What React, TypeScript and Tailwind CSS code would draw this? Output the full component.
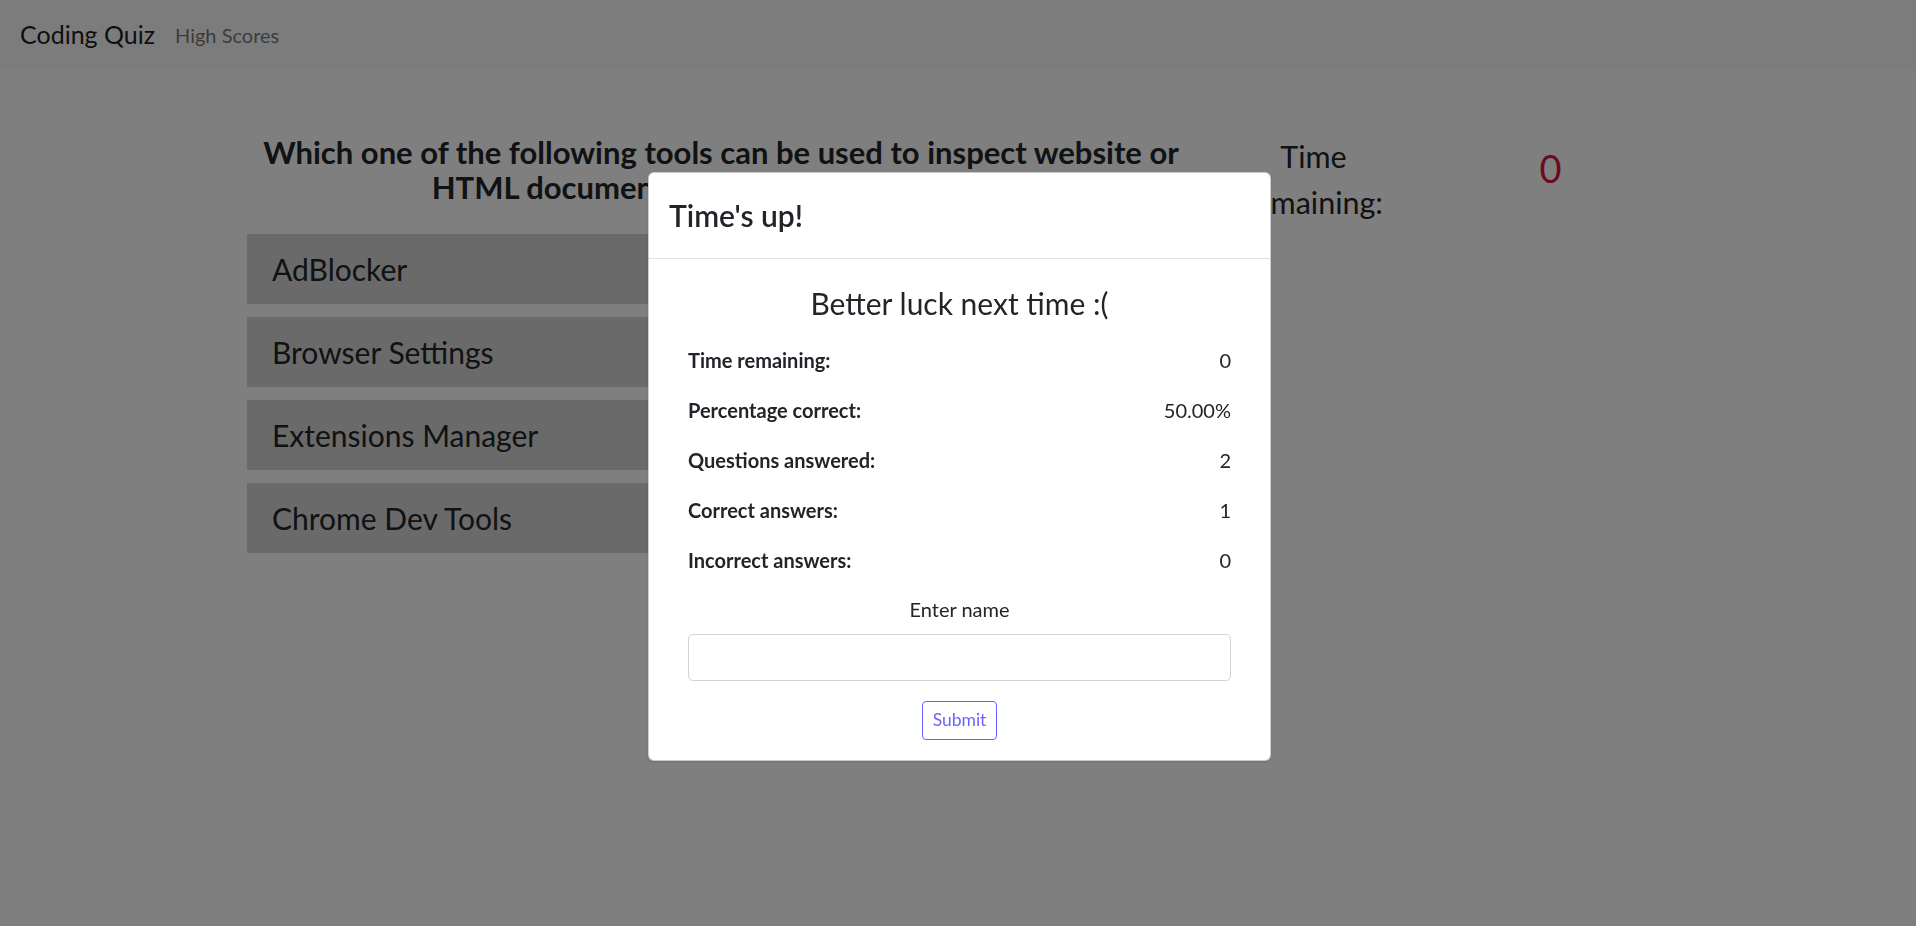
import React from "react";

const answers = ["AdBlocker", "Browser Settings", "Extensions Manager", "Chrome Dev Tools"];

const stats = [
  { label: "Time remaining:", value: "0" },
  { label: "Percentage correct:", value: "50.00%" },
  { label: "Questions answered:", value: "2" },
  { label: "Correct answers:", value: "1" },
  { label: "Incorrect answers:", value: "0" },
];

const font = "font-['Lato','Liberation_Sans',sans-serif]";

export default function App() {
  return (
    <div className={`relative min-h-[926px] bg-white text-[#212529] ${font}`}>
      {/* Navbar */}
      <nav className="flex h-[70px] items-center bg-[#f8f9fa] px-[20px]">
        <span className="text-[25px] text-black/90">Coding Quiz</span>
        <span className="ml-[20px] text-[20px] text-black/55">High Scores</span>
      </nav>

      {/* Quiz */}
      <main className="mx-auto grid w-[1422px] grid-cols-[948px_237px_237px] pt-[65px]">
        <div>
          <h2 className="px-[10px] text-center text-[31px] font-bold leading-[35px]">
            Which one of the following tools can be used to inspect website or HTML document structure and its styling?
          </h2>
          <div className="mt-[29px] flex flex-col gap-[13px]">
            {answers.map((a) => (
              <button
                key={a}
                type="button"
                className="flex h-[70px] items-center bg-[#d4d4d4] px-[25px] text-left text-[30px] text-[#212529]"
              >
                {a}
              </button>
            ))}
          </div>
        </div>
        <div className="-mt-[2px] px-[36px] text-center text-[30.5px] leading-[46px]">Time remaining:</div>
        <div className="pt-[10px] text-center text-[38px] leading-[46px] text-[#dc143c]">0</div>
      </main>

      {/* Backdrop + modal */}
      <div className="fixed inset-0 bg-black/50">
        <div className="ml-[648px] mt-[172px] w-[623px] rounded-[6px] border border-black/20 bg-white shadow-sm">
          <div className="flex h-[86px] items-center border-b border-[#dee2e6] px-[20px]">
            <h4 className="text-[30px] font-semibold leading-[45px]">Time&apos;s up!</h4>
          </div>
          <div className="px-[39px] pb-[20px] pt-[26px]">
            <h4 className="text-center text-[30px] leading-[36px]">Better luck next time :(</h4>
            <div className="mt-[14px]">
              {stats.map((s) => (
                <div key={s.label} className="flex h-[50px] items-center justify-between text-[20px]">
                  <span className="font-bold">{s.label}</span>
                  <span>{s.value}</span>
                </div>
              ))}
            </div>
            <label className="mt-[9px] block text-center text-[20px] leading-[30px]">Enter name</label>
            <input
              type="text"
              className="mt-[10px] block h-[47px] w-full rounded-[5px] border border-[#ced4da] px-[15px] text-[20px] outline-none"
            />
            <div className="mt-[20px] flex justify-center">
              <button
                type="button"
                className="h-[39px] rounded-[4px] border border-[#6c63ff] px-[10px] text-[17.5px] text-[#6c63ff]"
              >
                Submit
              </button>
            </div>
          </div>
        </div>
      </div>
    </div>
  );
}
